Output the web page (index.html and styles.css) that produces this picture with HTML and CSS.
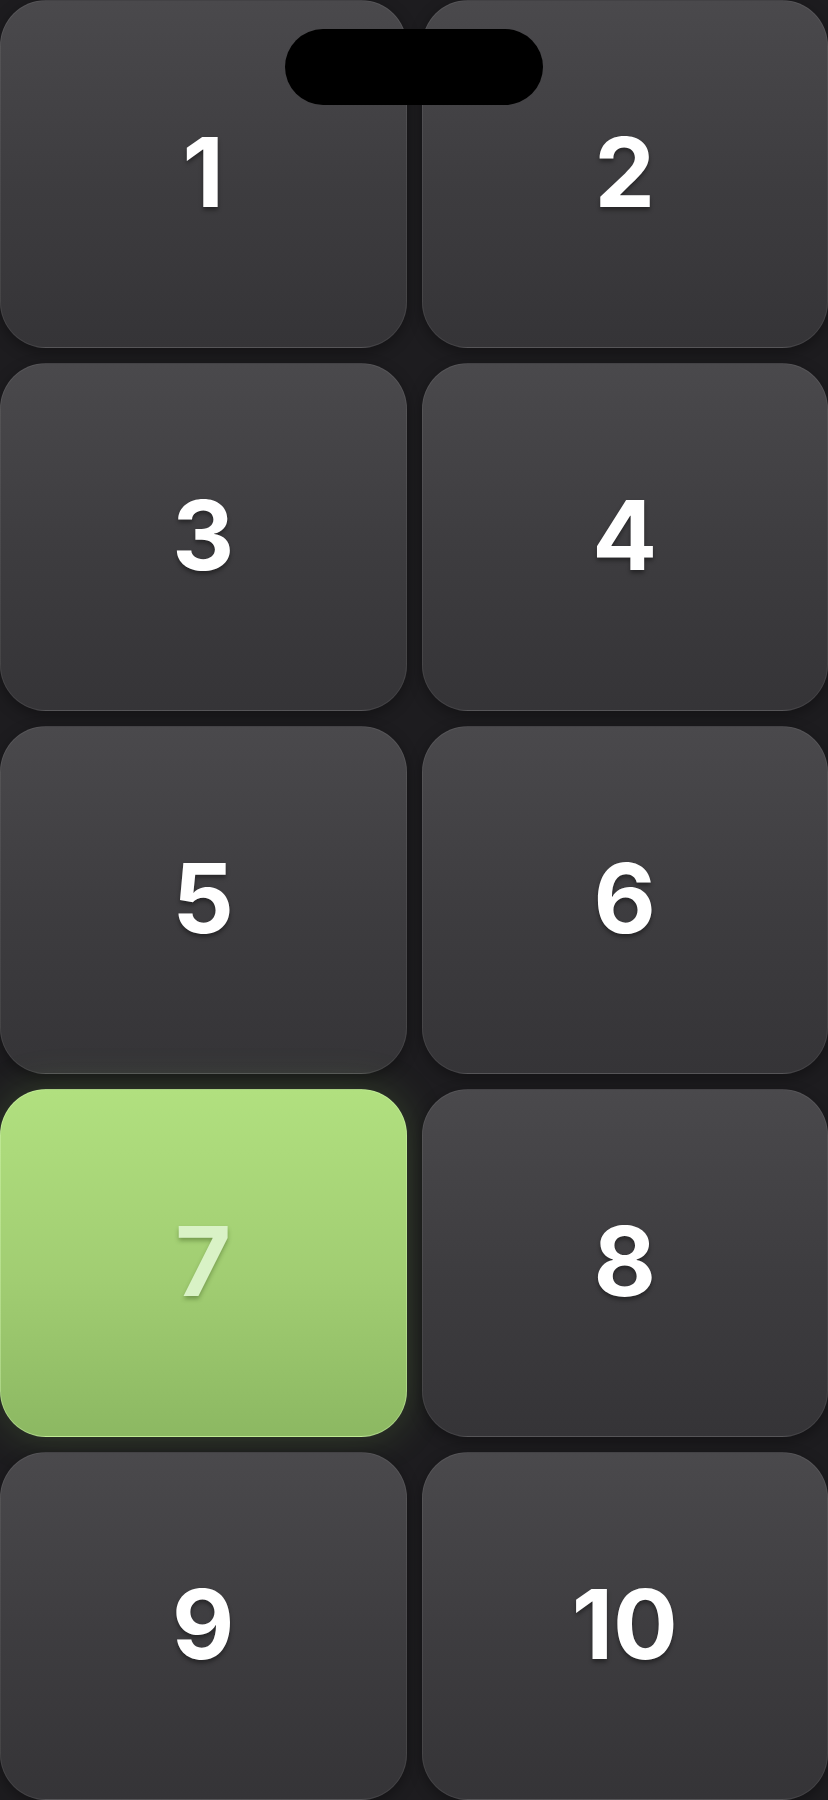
FILE: index.html
```html
<!DOCTYPE html>
<html lang="en">
<head>
    <meta charset="UTF-8">
    <meta name="viewport" content="width=device-width, initial-scale=1.0">
    <title>Number Pad</title>
    <link rel="stylesheet" href="styles.css">
</head>
<body>
    <div class="notch"></div>
    <div class="pad">
        <button class="tile">1</button>
        <button class="tile">2</button>
        <button class="tile">3</button>
        <button class="tile">4</button>
        <button class="tile">5</button>
        <button class="tile">6</button>
        <button class="tile active">7</button>
        <button class="tile">8</button>
        <button class="tile">9</button>
        <button class="tile">10</button>
    </div>
</body>
</html>
```
FILE: styles.css
```css
html {
    box-sizing: border-box;
    height: 100%;
}

*,
*::before,
*::after {
    box-sizing: inherit;
    margin: 0;
    padding: 0;
}

body {
    background: #1d1c1f;
    font-family: 'Inter', 'Liberation Sans', sans-serif;
    height: 100%;
    overflow: hidden;
}

.notch {
    background: #000;
    border-radius: 38px;
    height: 76px;
    left: 285px;
    position: absolute;
    top: 29px;
    width: 258px;
    z-index: 2;
}

.pad {
    display: grid;
    grid-template-columns: repeat(2, 1fr);
    grid-template-rows: repeat(5, 348px);
    gap: 15px;
    height: 1800px;
}

.tile {
    align-items: center;
    background: linear-gradient(180deg, #4a494c 0%, #3d3c3f 55%, #353437 100%);
    border: 1px solid rgba(255, 255, 255, 0.07);
    border-radius: 46px;
    box-shadow: 0 4px 14px rgba(0, 0, 0, 0.35);
    color: #ffffff;
    display: flex;
    font-family: inherit;
    font-size: 96px;
    font-weight: 700;
    justify-content: center;
    letter-spacing: 0;
    padding-bottom: 4px;
    text-shadow: 0 3px 4px rgba(0, 0, 0, 0.4);
}

.active {
    background: linear-gradient(180deg, #b1e07f 0%, #a1cd72 55%, #8cb862 100%);
    border-color: rgba(220, 255, 190, 0.35);
    box-shadow: 0 0 40px rgba(140, 200, 90, 0.22);
    color: #d9f2c6;
    text-shadow: 0 3px 4px rgba(60, 90, 30, 0.45);
}
```
